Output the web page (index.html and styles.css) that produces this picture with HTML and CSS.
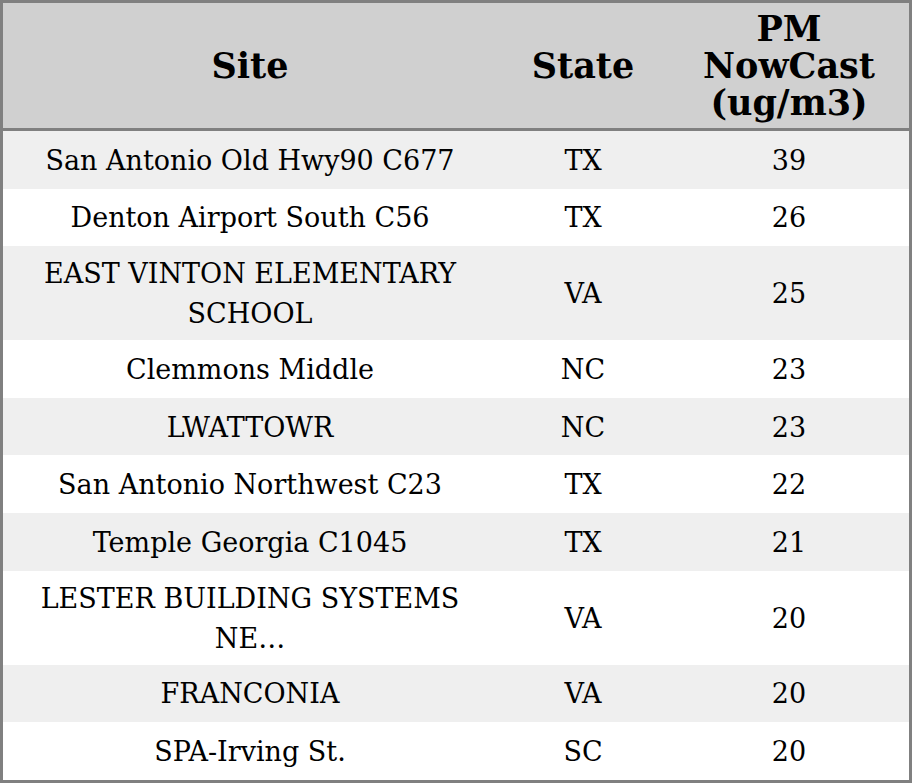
FILE: index.html
```html
<!DOCTYPE html>
<html>
<head>
<meta charset="utf-8">
<link rel="stylesheet" href="styles.css">
</head>
<body>
<table class="aq">
  <thead>
    <tr>
      <th class="c-site">Site</th>
      <th class="c-state">State</th>
      <th class="c-pm">PM<br>NowCast<br>(ug/m3)</th>
    </tr>
  </thead>
  <tbody>
    <tr><td>San Antonio Old Hwy90 C677</td><td>TX</td><td>39</td></tr>
    <tr><td>Denton Airport South C56</td><td>TX</td><td>26</td></tr>
    <tr class="two"><td>EAST VINTON ELEMENTARY SCHOOL</td><td>VA</td><td>25</td></tr>
    <tr><td>Clemmons Middle</td><td>NC</td><td>23</td></tr>
    <tr><td>LWATTOWR</td><td>NC</td><td>23</td></tr>
    <tr><td>San Antonio Northwest C23</td><td>TX</td><td>22</td></tr>
    <tr><td>Temple Georgia C1045</td><td>TX</td><td>21</td></tr>
    <tr class="two"><td>LESTER BUILDING SYSTEMS NE…</td><td>VA</td><td>20</td></tr>
    <tr><td>FRANCONIA</td><td>VA</td><td>20</td></tr>
    <tr><td>SPA-Irving St.</td><td>SC</td><td>20</td></tr>
  </tbody>
</table>
</body>
</html>
```
FILE: styles.css
```css
html, body {
  margin: 0;
  padding: 0;
  background: #ffffff;
}
.aq {
  width: 912px;
  border-collapse: collapse;
  border: 3px solid #808080;
  font-family: "DejaVu Serif", serif;
  color: #000;
  table-layout: fixed;
}
.aq th {
  background: #d0d0d0;
  font-weight: bold;
  font-size: 35px;
  line-height: 37px;
  padding: 7px 0;
  height: 111px;
  text-align: center;
  vertical-align: middle;
  border-bottom: 3px solid #808080;
}
.c-site { width: 494px; }
.c-state { width: 172px; }
.aq td {
  font-size: 27px;
  line-height: 40px;
  padding: 8px 18px 6px;
  height: 43.6px;
  text-align: center;
  vertical-align: middle;
}
.aq tbody tr:nth-child(odd) td {
  background: #efefef;
}
```
